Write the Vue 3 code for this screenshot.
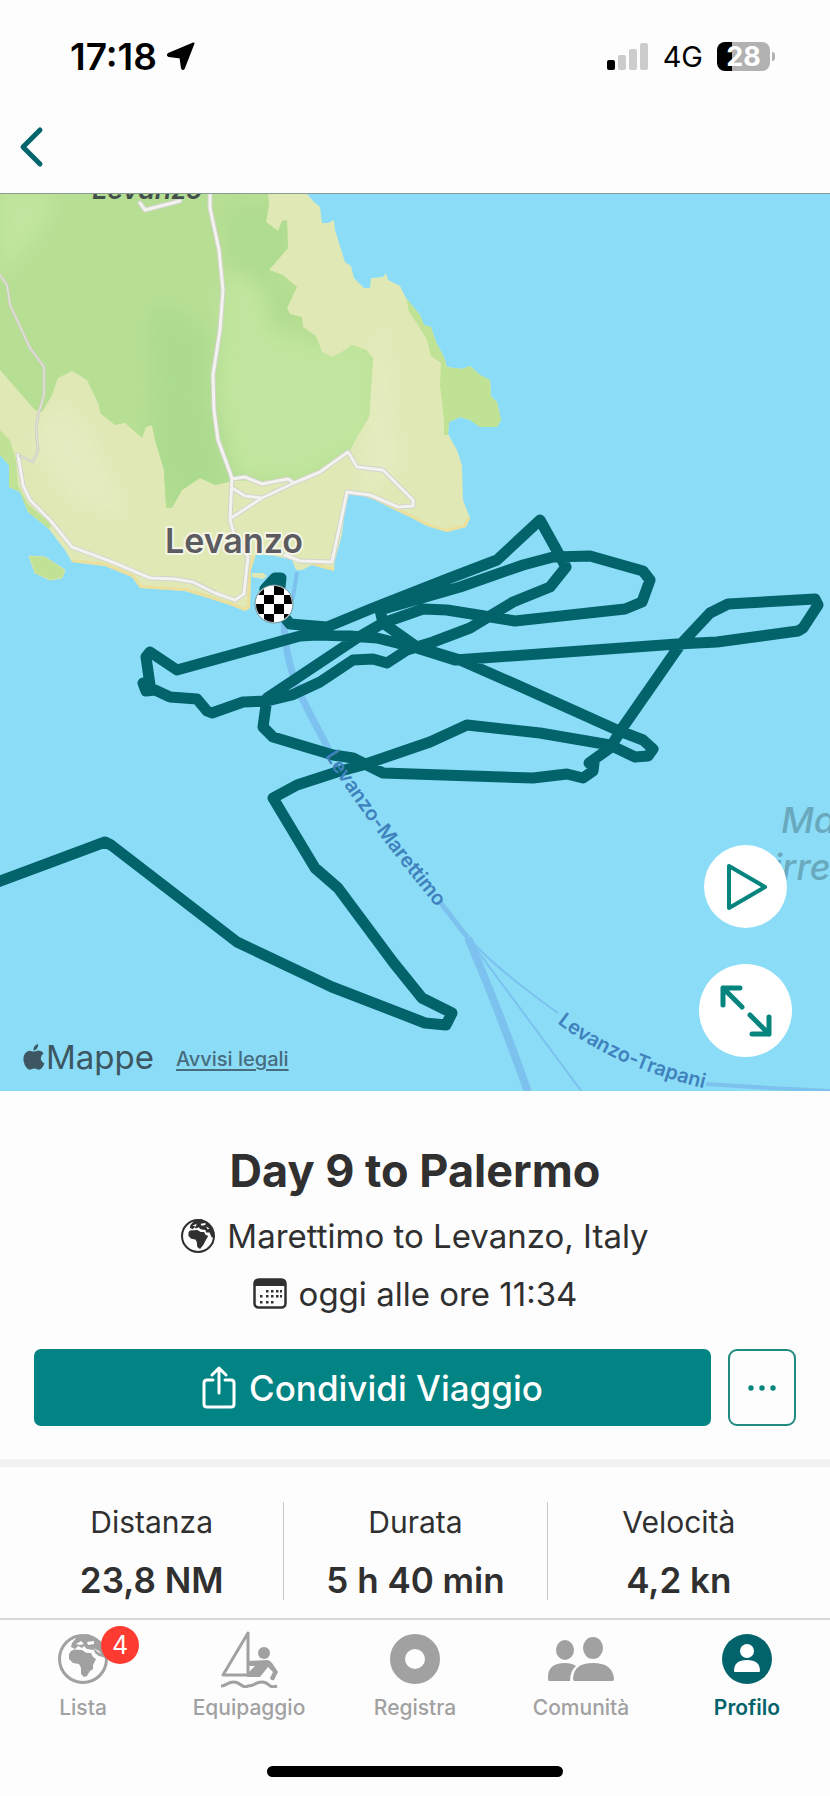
<script setup>
const stats = [
  { label: 'Distanza', value: '23,8 NM' },
  { label: 'Durata', value: '5 h 40 min' },
  { label: 'Velocità', value: '4,2 kn' }
]
const tabs = [
  { id: 'lista', label: 'Lista', badge: 4 },
  { id: 'equipaggio', label: 'Equipaggio' },
  { id: 'registra', label: 'Registra' },
  { id: 'comunita', label: 'Comunità' },
  { id: 'profilo', label: 'Profilo', active: true }
]
</script>

<template>
  <div class="screen">
    <header class="status">
      <div class="clock">
        <span>17:18</span>
        <svg width="28" height="28" viewBox="0 0 28 28" aria-hidden="true">
          <path d="M26.500 1.500 17 26Q16 28 15 26L13.500 15.500 2 14Q0 13 1.500 12Z" fill="#000" stroke="#000" stroke-width="2" stroke-linejoin="round" />
        </svg>
      </div>
      <div class="signals">
        <svg width="42" height="27" viewBox="0 0 42 27" aria-hidden="true">
          <rect x="0" y="17" width="8" height="10" rx="2" fill="#000" />
          <rect x="11" y="12" width="8" height="15" rx="2" fill="#ccc" />
          <rect x="22" y="6" width="8" height="21" rx="2" fill="#ccc" />
          <rect x="33" y="0" width="8" height="27" rx="2" fill="#ccc" />
        </svg>
        <span class="network">4G</span>
        <span class="battery">28</span>
      </div>
    </header>

    <nav class="topnav">
      <button class="back" aria-label="Indietro">
        <svg width="27" height="42" viewBox="0 0 27 42" aria-hidden="true">
          <path d="M22 4 5 21 22 38" fill="none" stroke="#03656c" stroke-width="5" stroke-linecap="round" stroke-linejoin="round" />
        </svg>
      </button>
    </nav>

    <section class="map">
      <svg class="chart" viewBox="0 194 830 897" role="img" aria-label="Mappa del viaggio">
        <defs>
          <filter id="soft" x="-50%" y="-50%" width="200%" height="200%"><feGaussianBlur stdDeviation="9" /></filter>
          <clipPath id="woods"><use href="#forest" /></clipPath>
          <clipPath id="shore"><use href="#island" /></clipPath>
          <clipPath id="disc"><circle cx="274" cy="604" r="18" /></clipPath>
        </defs>
        <rect x="0" y="194" width="830" height="897" fill="#8bdcf7" />
        <path id="island" fill="#e0e9b6" d="M307 194 314 202 320 207 322 223 328 223 334 220 335 230 340 246 345 262 351 266 354 278 364 288 370 288 371 278 383 277 386 273 388 280 400 286 406 298 420 315 424 325 431 327 436 342 444 357 447 367 462 369 470 366 480 375 490 380 491 396 497 402 501 420 497 427 480 427 470 420 460 417 449 422 448 434 457 450 462 465 463 500 470 518 466 527 447 532 427 526 410 517 395 510 375 500 355 493 347 493 342 535 335 560 334 571 312 565 302 570 296 570 292 560 275 556 256 554 251 570 250 608 245 611 230 605 205 597 185 591 140 588 132 577 105 566 72 562 65 550 48 528 28 512 20 492 9 487 9 465 0 455V194Z" />
        <g clip-path="url(#shore)">
          <path fill="#bfe295" d="M406 296 409 312 420 328 427 340 431 356 441 363 440 385 444 420 444 435 510 435V360L447 360 430 320ZM0 430 10 440 16 460 18 485 28 504 52 525 40 540 0 500Z" />
          <path fill="none" stroke="#eadf9c" stroke-width="6" d="M256 556 251 570 250 608 245 611 230 605 205 597 185 591 140 588 132 577 105 566 72 562M334 571 312 565M470 518 466 527 447 532 427 526 395 510 355 494" />
          <g filter="url(#soft)" fill="#e8edc6" opacity=".6"><path d="M385 320 400 470 360 500 375 340ZM60 400 90 430 130 520 70 500 30 440Z" /></g>
        </g>
        <path id="forest" fill="#b7df94" d="M0 194H268L269 205 266 222 278 231 282 221 287 220 288 248 269 270 283 275 297 287 287 308 290 314 302 317 303 327 316 336 322 352 332 357 342 352 352 345 366 350 373 358 369 417 358 435 350 450 320 470 305 480 290 483 280 479 262 482 255 480 233 481 215 485 200 478 182 490 172 508 166 508 164 470 155 440 152 425 146 427 142 438 125 423 115 425 100 413 99 405 87 380 72 371 58 378 52 395 42 412 35 410 20 393 0 370Z" />
        <g clip-path="url(#woods)">
          <g filter="url(#soft)">
            <path fill="#c1e59e" d="M0 190H52L48 220 15 260 0 275ZM225 275 260 275 270 325 310 345 375 340V440L300 480 235 475 218 400Z" />
            <path fill="#acdb8f" d="M160 300 210 330 212 400 235 480 175 510 150 470 148 420 152 380 145 330Z" />
            <path fill="#afdc90" d="M225 205H290V260L270 280 300 300 280 340 265 290 228 265Z" />
          </g>
        </g>
        <path fill="#bfe295" stroke="#dbe3a5" d="M29 556 45 557 65 570 62 578 50 580 35 573Z" />
        <path fill="#e0e9b6" d="M252 573 263 573 267 576 263 579 252 577Z" />

        <g fill="none" stroke-linejoin="round" stroke-linecap="round">
          <g id="roads">
            <path id="roadMain" d="M210 194V208L219 250 223 290 220 330 213 375 214 410 218 440 232 478 230 520 236 540 248 557 246 575 244 594 235 600 215 593 193 582 175 579 150 578 115 563 72 547 50 520 30 500 23 485 18 455" stroke="#d2d3cc" stroke-width="5" />
            <path id="roadEast" d="M232 479 245 477 262 484 288 479 294 483 262 498 231 518M232 488 245 496 262 498M294 483 320 472 348 452 357 467 383 470 413 500 413 506 398 507 370 495 347 492 332 562 300 561 285 555M140 203 145 210 180 201" stroke="#d2d3cc" stroke-width="5" />
          </g>
          <path stroke="#f3f2ef" stroke-width="3" d="M210 194V208L219 250 223 290 220 330 213 375 214 410 218 440 232 478 230 520 236 540 248 557 246 575 244 594 235 600 215 593 193 582 175 579 150 578 115 563 72 547 50 520 30 500 23 485 18 455M232 479 245 477 262 484 288 479 294 483 262 498 231 518M232 488 245 496 262 498M294 483 320 472 348 452 357 467 383 470 413 500 413 506 398 507 370 495 347 492 332 562 300 561 285 555M140 203 145 210 180 201" />
          <path stroke="#cfcfc8" stroke-width="3" d="M0 275 7 285 10 305 30 348 44 367V395L38 415 36 430 38 450 33 462 20 456" />
          <path stroke="#e6e8d2" stroke-width="1" d="M0 275 7 285 10 305 30 348 44 367V395L38 415 36 430 38 450 33 462 20 456" />
        </g>

        <g fill="none" stroke="#7dc2ee">
          <path stroke-width="4" d="M297 572 293 597 284 618" />
          <path stroke-width="7" d="M284 618Q284 665 308 710L330 752" />
          <path stroke-width="5" d="M440 902 468 938" />
          <path stroke-width="8" d="M468 938Q497 1005 528 1092" />
          <path stroke-width="2" d="M468 938Q500 972 558 1013M468 938 582 1092" />
          <path stroke-width="4" d="M706 1084 770 1088 830 1091" />
        </g>

        <g fill="none" stroke="#02636b" stroke-width="11" stroke-linejoin="round" stroke-linecap="round">
          <path d="M-5 883 105 842 111 845 237 942 332 987 425 1023 446 1025 452 1013 422 998 393 962 338 888 315 868 273 798 297 785 337 772 363 765 430 742 467 725 540 733 610 745 635 757 648 756 653 749 643 740 617 730 517 685 460 660 417 647 383 623 380 610 460 587 523 565 553 557 590 556 643 571 650 580 642 602 625 609 515 621 447 610 423 609 383 623 357 638 267 698 263 727 273 737 333 755 353 758 383 773 533 778 567 774 583 778 593 771 594 763 589 763 610 748 623 727 680 645 710 613 728 604 815 599 818 605 803 628 798 631 717 642 677 644 455 660 417 648 377 638 350 636 317 635 300 636 177 670 150 652 146 657 150 685 143 683 146 691 155 690 170 697 197 699 207 711 212 713 243 702 267 701 292 695 320 682 353 660 373 659 387 663 407 650 433 642 470 628 513 602 550 587 566 567 540 520 497 560 450 578 373 608 327 627 290 624 274 604 265 589 275 578 281 578 280 587 268 590" />
        </g>

        <circle cx="274" cy="604" r="19" fill="#fff" stroke="#718c91" />
        <g clip-path="url(#disc)" fill="#000">
          <path d="M254 585h10v10h-10zM274 585h10v10h-10zM264 595h10v9h-10zM284 595h10v9h-10zM254 604h10v10h-10zM274 604h10v10h-10zM264 614h10v10h-10zM284 614h10v10h-10z" />
        </g>

        <path id="marettimoLine" fill="none" d="M325 756Q370 828 445 917" />
        <path id="trapaniLine" fill="none" d="M557 1023Q618 1070 720 1092" />
        <text class="ferry"><textPath href="#marettimoLine">Levanzo-Marettimo</textPath></text>
        <text class="ferry"><textPath href="#trapaniLine">Levanzo-Trapani</textPath></text>
        <text class="peak" x="92" y="199">Levanzo</text>
        <text class="town" x="165" y="553">Levanzo</text>
        <text class="sea" x="781" y="833">Ma</text>
        <text class="sea" x="773" y="880">irre</text>
      </svg>

      <div class="credits">
        <span class="brand">
          <svg width="22" height="26" viewBox="0 0 22 26" aria-hidden="true">
            <path fill="#3c5662" d="M15 0Q15.500 3 13.500 5T10.500 6.300Q10.300 3.500 12 1.800T15 0ZM15.300 6.500Q18.700 6.500 20.700 9.200 17.700 11.200 17.800 14.200 18 17.800 21.500 19.300 20.500 22.200 18.600 24.300 17 26 15 25.600 12.700 24.400 11.300 24.500 9.800 24.500 8.300 25.300 6 26.600 3.800 24 1 20.800.5 16.500 0 12 2.200 9.200 4.300 6.500 7 6.700 9.700 7.600 11 7.600 12.300 7.300 15.300 6.500Z" />
          </svg>Mappe</span>
        <a class="legal" href="#legal">Avvisi legali</a>
      </div>
      <div class="controls">
        <button class="round play" aria-label="Riproduci">
          <svg width="44" height="50" viewBox="0 0 44 50" aria-hidden="true">
            <path d="M5 4V46L41 25Z" fill="none" stroke="#06857f" stroke-width="4" stroke-linejoin="round" />
          </svg>
        </button>
        <button class="round expand" aria-label="Espandi">
          <svg width="54" height="54" viewBox="0 0 54 54" fill="none" stroke="#06857f" stroke-width="5" stroke-linecap="round" stroke-linejoin="round" aria-hidden="true">
            <path d="M21 4H4V21M4 4 23 23M33 50H50V33M50 50 31 31" />
          </svg>
        </button>
      </div>
    </section>

    <main class="trip">
      <h1>Day 9 to Palermo</h1>
      <p class="meta">
        <svg width="34" height="34" viewBox="0 0 50 50" aria-hidden="true">
          <circle cx="25" cy="25" r="23.500" fill="none" stroke="#303030" stroke-width="3" />
          <path fill="#303030" d="M13 17 24 16 29 19 34 19 36 23 40 25 37 30 35 34 33 38 28 44 24 41 23 33 21 30 15 29 11 25 11 20ZM13 13 14 9 20 2 30 0 42 7 48 17 49 28 45 27 42 20 37 20 36 16 29 15 26 12 22 14 20 12 17 15Z" />
          <path fill="#fff" d="M17 10 23 7 22 11ZM29 7 36 6 36 9 30 10ZM37 11 42 14 39 15Z" />
        </svg>
        Marettimo to Levanzo, Italy
      </p>
      <p class="meta when">
        <svg width="34" height="32" viewBox="0 0 34 32" aria-hidden="true">
          <rect x="1.500" y="1.500" width="31" height="28" rx="4" fill="none" stroke="#303030" stroke-width="2.500" />
          <path d="M1 8V5Q1 1 5 1H29Q33 1 33 5V8Z" fill="#303030" />
          <g fill="#303030">
            <path d="M13 12h2.500v2.500H13zM18 12h2.500v2.500H18zM23 12h2.500v2.500H23zM27 12h2v2.500h-2zM7 17h2.500v2.500H7zM13 17h2.500v2.500H13zM18 17h2.500v2.500H18zM23 17h2.500v2.500H23zM27 17h2v2.500h-2zM7 23h2.500v2.500H7zM13 23h2.500v2.500H13zM18 23h2.500v2.500H18z" />
          </g>
        </svg>
        oggi alle ore 11:34
      </p>
      <div class="actions">
        <button class="share">
          <svg width="34" height="44" viewBox="0 0 34 44" fill="none" stroke="#fff" stroke-width="3" stroke-linecap="round" stroke-linejoin="round" aria-hidden="true">
            <path d="M11 14H5Q2 14 2 17V38Q2 41 5 41H29Q32 41 32 38V17Q32 14 29 14H23M17 27V3M10 9 17 2 24 9" />
          </svg>
          Condividi Viaggio
        </button>
        <button class="more" aria-label="Altre opzioni">
          <svg width="30" height="6" viewBox="0 0 30 6" fill="#06857f" aria-hidden="true">
            <circle cx="4" cy="3" r="2.700" /><circle cx="15" cy="3" r="2.700" /><circle cx="26" cy="3" r="2.700" />
          </svg>
        </button>
      </div>
    </main>

    <dl class="stats">
      <div v-for="s in stats" :key="s.label" class="stat">
        <dt>{{ s.label }}</dt>
        <dd>{{ s.value }}</dd>
      </div>
    </dl>

    <nav class="tabs">
      <button v-for="t in tabs" :key="t.id" class="tab" :class="{ active: t.active }">
        <span class="glyph">
          <svg v-if="t.id === 'lista'" width="50" height="50" viewBox="0 0 50 50" aria-hidden="true">
            <circle cx="25" cy="25" r="23.500" fill="none" stroke="currentColor" stroke-width="3" />
            <path fill="currentColor" d="M13 17 16 15.500 24 16 28 18.700 33 19 35 23 38 25 35 31 35 35 32 37 29 42 26 43 23 40 23 34 21 30 15 29 11 25 11 20ZM13 13 14 9 20 2 30 0 42 7 48 17 49 26 45 23 41 22 37 19 36 16 29 15 26 12 24 14 20 12 17 15Z" />
            <path fill="#fff" d="M18 10 23 7 26 10 22 11ZM29 8 36 7 36 10 30 11ZM35 14 41 17 43 20 40 18Z" />
          </svg>
          <svg v-else-if="t.id === 'equipaggio'" width="58" height="58" viewBox="0 0 58 58" aria-hidden="true">
            <path d="M28 3V45H3Z" fill="none" stroke="currentColor" stroke-width="3" stroke-linejoin="round" />
            <circle cx="44" cy="23" r="6" fill="currentColor" />
            <path d="M28 31 47 30Q50 30 52 33L58 42 54 50Q51 51 50 48L53 42 48 37 40 47H27V44L35 36H28Z" fill="currentColor" />
            <path d="M1 56Q4 56 7 54T14 52Q17 52 21 55T28 56Q32 56 35 54T42 52Q46 52 49 55T57 56" fill="none" stroke="currentColor" stroke-width="3" />
          </svg>
          <svg v-else-if="t.id === 'registra'" width="50" height="50" viewBox="0 0 50 50" aria-hidden="true">
            <circle cx="25" cy="25" r="17.500" fill="none" stroke="currentColor" stroke-width="15" />
          </svg>
          <svg v-else-if="t.id === 'comunita'" width="68" height="46" viewBox="0 0 68 46" fill="currentColor" aria-hidden="true">
            <ellipse cx="18" cy="14" rx="9" ry="10" />
            <ellipse cx="46" cy="12" rx="10" ry="11" />
            <path d="M2 45Q1 45 1 41 1 27 18 27 25 27 29 30 23 35 23 45ZM27 45Q26 45 26 42 27 27 46 27 65 27 67 42 67 45 66 45Z" />
          </svg>
          <svg v-else width="50" height="50" viewBox="0 0 50 50" aria-hidden="true">
            <circle cx="25" cy="25" r="25" fill="currentColor" />
            <ellipse cx="25" cy="17" rx="7" ry="7" fill="#fff" />
            <path d="M12 37Q12 26 25 26T38 37Q38 38 37 38H13Q12 38 12 37Z" fill="#fff" />
          </svg>
          <span v-if="t.badge" class="badge">{{ t.badge }}</span>
        </span>
        <span class="name">{{ t.label }}</span>
      </button>
    </nav>
    <div class="home"></div>
  </div>
</template>

<style>
body { margin: 0; background: #fdfdfd; }
</style>

<style scoped>
.screen {
  display: flex;
  flex-direction: column;
  background: #fdfdfd;
  color: #303030;
  font-family: Inter, "Liberation Sans", sans-serif;
}
button {
  margin: 0;
  padding: 0;
  border: 0;
  background: none;
  font-family: inherit;
  cursor: pointer;
}
svg { display: block; flex: none; }

.status {
  display: flex;
  justify-content: space-between;
  align-items: center;
  height: 40px;
  padding: 36px 60px 0 70px;
  color: #000;
}
.clock, .signals { display: flex; align-items: center; }
.clock { gap: 10px; font-size: 37px; font-weight: 600; }
.signals { gap: 14px; }
.network { font-size: 29px; font-weight: 400; }
.battery {
  position: relative;
  width: 53px;
  border-radius: 8px;
  background: linear-gradient(90deg, #000 15px, #b2b2b2 15px);
  color: #fff;
  font-size: 27px;
  line-height: 29px;
  font-weight: 700;
  text-align: center;
}
.battery::after {
  content: "";
  position: absolute;
  right: -5px;
  top: 10px;
  width: 3px;
  height: 9px;
  border-radius: 0 3px 3px 0;
  background: #b2b2b2;
}
.topnav { padding: 50px 18px 25px; border-bottom: 1px solid #8a9c98; }
.back { display: block; }

.map { position: relative; }
.chart { width: 100%; height: auto; }
.ferry { font-size: 20px; font-weight: 600; fill: #3f82bd; }
.peak { font-size: 27px; font-weight: 600; font-style: italic; fill: #42504c; }
.town {
  font-size: 34px;
  font-weight: 600;
  fill: #5b5b60;
  stroke: #f5f5e8;
  stroke-width: 4px;
  stroke-linejoin: round;
  paint-order: stroke;
}
.sea { font-size: 36px; font-weight: 500; font-style: italic; fill: #69a9be; }
.credits {
  position: absolute;
  left: 23px;
  bottom: 14px;
  display: flex;
  align-items: center;
  gap: 22px;
  color: #3c5662;
}
.brand { display: flex; align-items: center; gap: 1px; font-size: 33px; line-height: 40px; }
.legal { padding-top: 4px; color: #476c7e; font-size: 20px; font-weight: 500; text-decoration-thickness: 2px; text-underline-offset: 3px; }
.controls {
  position: absolute;
  right: 38px;
  bottom: 34px;
  display: flex;
  flex-direction: column;
  align-items: center;
  gap: 36px;
}
.round { display: grid; place-items: center; border-radius: 50%; background: #fff; }
.play { width: 83px; height: 83px; }
.expand { width: 93px; height: 93px; }

.trip { padding: 52px 34px 33px; border-bottom: 8px solid #f2f2f2; }
h1 { margin: 0; font-size: 45px; line-height: 56px; font-weight: 700; text-align: center; }
.meta {
  display: flex;
  justify-content: center;
  align-items: center;
  gap: 12px;
  margin: 16px 0 0;
  font-size: 33px;
  line-height: 42px;
}
.actions { display: flex; gap: 17px; margin-top: 34px; }
.share {
  flex: 1;
  display: flex;
  justify-content: center;
  align-items: center;
  gap: 13px;
  height: 77px;
  border-radius: 7px;
  background: #018483;
  color: #fff;
  font-size: 35px;
  font-weight: 500;
}
.more {
  display: grid;
  place-items: center;
  width: 68px;
  border: 2px solid #218a80;
  border-radius: 9px;
}

.stats {
  display: grid;
  grid-template-columns: repeat(3, 1fr);
  margin: 0;
  padding: 35px 20px 18px;
  text-align: center;
}
.stat + .stat { border-left: 1px solid #c8c8c8; }
dt { font-size: 30px; line-height: 40px; }
dd { margin: 18px 0 0; font-size: 35px; line-height: 40px; font-weight: 600; }

.tabs {
  display: grid;
  grid-template-columns: repeat(5, 1fr);
  border-top: 2px solid #d9d9d9;
  padding-top: 10px;
}
.tab { display: flex; flex-direction: column; align-items: center; color: #a1a1a1; }
.glyph { position: relative; display: flex; align-items: center; justify-content: center; height: 58px; }
.name { margin-top: 6px; font-size: 21px; line-height: 28px; font-weight: 500; }
.active { color: #02636b; }
.active .name { font-weight: 600; }
.badge {
  position: absolute;
  left: 43px;
  top: -4px;
  width: 38px;
  border-radius: 50%;
  background: #fe3b30;
  color: #fff;
  font-size: 25px;
  line-height: 38px;
  text-align: center;
}
.home { width: 296px; height: 11px; margin: 44px auto 17px; border-radius: 6px; background: #000; }
</style>
